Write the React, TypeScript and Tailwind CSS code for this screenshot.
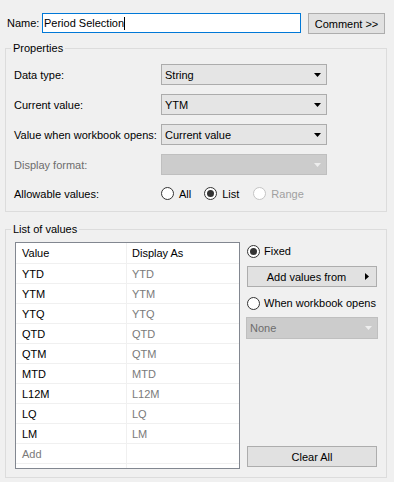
import React from "react";

const Arrow = ({ color = "#000" }: { color?: string }) => (
  <svg width="7" height="4" viewBox="0 0 7 4" className="shrink-0">
    <path d="M0 0H7L3.5 4Z" fill={color} />
  </svg>
);

const Radio = ({ checked, disabled }: { checked?: boolean; disabled?: boolean }) => (
  <span
    className={
      disabled
        ? "w-[13px] h-[13px] rounded-full border border-[#c4c4c4] bg-white flex items-center justify-center shrink-0"
        : "w-[13px] h-[13px] rounded-full border border-[#333333] bg-white flex items-center justify-center shrink-0"
    }
  >
    {checked && <span className="w-[7px] h-[7px] rounded-full bg-[#333333]" />}
  </span>
);

const Dropdown = ({ value, disabled, className }: { value?: string; disabled?: boolean; className?: string }) => (
  <div
    className={
      (disabled
        ? "border border-[#bfbfbf] bg-[#cccccc] text-[#6d6d6d] "
        : "border border-[#acacac] bg-[#e5e5e5] text-black ") +
      "flex items-center pl-[3px] pr-[5px] " +
      (className ?? "")
    }
  >
    <span className="flex-1">{value}</span>
    <Arrow color={disabled ? "#eeeeee" : "#000"} />
  </div>
);

const rows = ["YTD", "YTM", "YTQ", "QTD", "QTM", "MTD", "L12M", "LQ", "LM"];

export default function App() {
  return (
    <div className="w-[394px] h-[482px] bg-[#f0f0f0] text-[11px] leading-[14px] text-black font-['Liberation_Sans',Arial,sans-serif] overflow-hidden">
      {/* Name row */}
      <div className="flex items-start pt-[13px] pl-[7px]">
        <span className="w-[35px] h-[20px] flex items-center">Name:</span>
        <div className="w-[259px] h-[20px] border border-[#0078d7] bg-white flex items-center pl-[1px]">
          <span>Period Selection</span>
          <span className="w-px h-[13px] bg-black" />
        </div>
        <button className="ml-[7px] w-[77px] h-[21px] border border-[#adadad] bg-[#e1e1e1] flex items-center justify-center">
          Comment &gt;&gt;
        </button>
      </div>

      {/* Properties */}
      <fieldset className="ml-[5px] mt-[7px] w-[382px] border border-[#dcdcdc] pb-[8px]">
        <legend className="ml-[5px] px-[2px] h-[14px] leading-[14px]">Properties</legend>
        <div className="pt-[9px] pl-[8px] flex flex-col gap-[9px]">
          <div className="flex items-center h-[21px]">
            <span className="w-[147px]">Data type:</span>
            <Dropdown value="String" className="w-[166px] h-[21px]" />
          </div>
          <div className="flex items-center h-[21px]">
            <span className="w-[147px]">Current value:</span>
            <Dropdown value="YTM" className="w-[166px] h-[21px]" />
          </div>
          <div className="flex items-center h-[21px]">
            <span className="w-[147px]">Value when workbook opens:</span>
            <Dropdown value="Current value" className="w-[166px] h-[21px]" />
          </div>
          <div className="flex items-center h-[21px]">
            <span className="w-[147px] text-[#6d6d6d]">Display format:</span>
            <Dropdown disabled className="w-[166px] h-[21px]" />
          </div>
          <div className="flex items-center h-[19px]">
            <span className="w-[147px]">Allowable values:</span>
            <div className="flex items-center">
              <Radio />
              <span className="ml-[5px]">All</span>
              <span className="ml-[13px]"><Radio checked /></span>
              <span className="ml-[5px]">List</span>
              <span className="ml-[14px]"><Radio disabled /></span>
              <span className="ml-[5px] text-[#a0a0a0]">Range</span>
            </div>
          </div>
        </div>
      </fieldset>

      {/* List of values */}
      <fieldset className="ml-[5px] mt-[10px] w-[382px] border border-[#dcdcdc] pb-[8px]">
        <legend className="ml-[5px] px-[2px] h-[14px] leading-[14px]">List of values</legend>
        <div className="pt-[6px] pl-[9px] flex">
          {/* table */}
          <div className="w-[225px] h-[227px] border border-[#828790] bg-white overflow-hidden">
            <div className="flex h-[21px] border-b border-[#f0f0f0]">
              <div className="w-[111px] border-r border-[#f0f0f0] pl-[6px] flex items-center">Value</div>
              <div className="flex-1 pl-[5px] flex items-center">Display As</div>
            </div>
            {rows.map((r) => (
              <div key={r} className="flex h-[20px] border-b border-[#f0f0f0]">
                <div className="w-[111px] border-r border-[#f0f0f0] pl-[6px] flex items-center">{r}</div>
                <div className="flex-1 pl-[5px] flex items-center text-[#7a7a7a]">{r}</div>
              </div>
            ))}
            <div className="flex h-[20px] border-b border-[#f0f0f0]">
              <div className="w-[111px] border-r border-[#f0f0f0] pl-[6px] flex items-center text-[#7a7a7a]">Add</div>
              <div className="flex-1" />
            </div>
            <div className="flex h-[10px]">
              <div className="w-[111px] border-r border-[#f0f0f0]" />
              <div className="flex-1" />
            </div>
          </div>

          {/* right column */}
          <div className="ml-[6px] w-[132px] flex flex-col">
            <div className="flex items-center h-[18px] pl-[1px]">
              <Radio checked />
              <span className="ml-[4px]">Fixed</span>
            </div>
            <button className="mt-[6px] ml-[1px] w-[130px] h-[21px] border border-[#adadad] bg-[#e1e1e1] flex items-center pr-[7px]">
              <span className="flex-1 text-center">Add values from</span>
              <svg width="4" height="7" viewBox="0 0 4 7" className="shrink-0">
                <path d="M0 0L4 3.5L0 7Z" fill="#000" />
              </svg>
            </button>
            <div className="mt-[7px] flex items-center h-[18px] pl-[1px]">
              <Radio />
              <span className="ml-[4px]">When workbook opens</span>
            </div>
            <Dropdown value="None" disabled className="mt-[5px] w-[132px] h-[22px]" />
            <button className="mt-auto mb-[2px] ml-[1px] w-[130px] h-[21px] border border-[#adadad] bg-[#e1e1e1] flex items-center justify-center">
              Clear All
            </button>
          </div>
        </div>
      </fieldset>
    </div>
  );
}
